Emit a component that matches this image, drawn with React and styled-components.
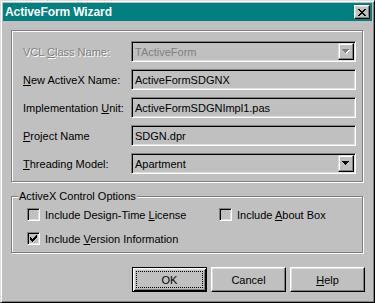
import React from 'react';
import styled, { createGlobalStyle } from 'styled-components';

const Global = createGlobalStyle`
  html, body { margin: 0; padding: 0; background: #c0c0c0; }
  body { font-family: "Liberation Sans", Arial, sans-serif; font-size: 11px; color: #000; }
`;

const Window = styled.div`
  box-sizing: border-box;
  width: 375px;
  height: 303px;
  background: #c0c0c0;
  border: 1px solid;
  border-color: #dfdfdf #000 #000 #dfdfdf;
  box-shadow: inset 1px 1px #fff, inset -1px -1px #808080;
  padding: 2px;
  display: flex;
  flex-direction: column;
`;

const TitleBar = styled.div`
  height: 18px;
  background: #008080;
  color: #fff;
  font-weight: bold;
  font-size: 12px;
  display: flex;
  align-items: center;
  justify-content: space-between;
  padding: 0 2px 0 2px;
`;

const TitleText = styled.span`
  letter-spacing: -0.1px;
`;

const CloseButton = styled.div`
  box-sizing: border-box;
  width: 16px;
  height: 14px;
  background: #c0c0c0;
  border: 1px solid;
  border-color: #fff #000 #000 #fff;
  box-shadow: inset -1px -1px #808080, inset 1px 1px #dfdfdf;
  display: flex;
  align-items: center;
  justify-content: center;
`;

const Content = styled.div`
  display: flex;
  flex-direction: column;
  padding: 9px 7px 0 8px;
`;

const GroupBox = styled.div`
  position: relative;
  box-sizing: border-box;
  width: 352px;
  border: 1px solid #808080;
  box-shadow: inset 1px 1px #fff, 1px 1px #fff;
  margin-top: ${p => p.$mt || 0}px;
`;

const FormGrid = styled.div`
  display: grid;
  grid-template-columns: 108px 225px;
  row-gap: 7px;
  align-items: center;
  padding: 10px 6px 7px 11px;
`;

const Label = styled.span`
  color: ${p => (p.$disabled ? '#808080' : '#000')};
  text-shadow: ${p => (p.$disabled ? '1px 1px 0 #fff' : 'none')};
  white-space: nowrap;
`;

const Field = styled.div`
  box-sizing: border-box;
  width: 225px;
  height: 21px;
  border: 1px solid;
  border-color: #808080 #fff #fff #808080;
  box-shadow: inset 1px 1px #000, inset -1px -1px #dfdfdf;
  background: #c0c0c0;
  padding: 1px;
  display: flex;
  align-items: center;
`;

const FieldValue = styled.span`
  flex: 1;
  padding-left: 2px;
  color: ${p => (p.$disabled ? '#808080' : '#000')};
  white-space: nowrap;
`;

const DropButton = styled.div`
  box-sizing: border-box;
  width: 16px;
  height: 17px;
  border: 1px solid;
  border-color: #dfdfdf #000 #000 #dfdfdf;
  box-shadow: inset -1px -1px #808080, inset 1px 1px #fff;
  display: flex;
  align-items: center;
  justify-content: center;
`;

const OptionsGrid = styled.div`
  display: grid;
  grid-template-columns: 192px auto;
  row-gap: 11px;
  padding: 11px 6px 7px 15px;
`;

const Legend = styled.span`
  position: absolute;
  top: -7px;
  left: 6px;
  padding: 0 1px 0 1px;
  background: #c0c0c0;
  line-height: 13px;
`;

const CheckItem = styled.div`
  display: flex;
  align-items: center;
  gap: 5px;
  height: 13px;
`;

const CheckBox = styled.div`
  box-sizing: border-box;
  width: 13px;
  height: 13px;
  flex: none;
  border: 1px solid;
  border-color: #808080 #fff #fff #808080;
  box-shadow: inset 1px 1px #000, inset -1px -1px #dfdfdf;
  background: #c0c0c0;
  display: flex;
  align-items: center;
  justify-content: center;
`;

const ButtonRow = styled.div`
  display: flex;
  justify-content: flex-end;
  gap: 4px;
  margin-top: 14px;
`;

const Button = styled.div`
  box-sizing: border-box;
  width: 75px;
  height: 25px;
  padding: 3px;
  display: flex;
  border: 1px solid;
  border-color: ${p => (p.$default ? '#000' : '#fff #000 #000 #fff')};
  box-shadow: ${p =>
    p.$default
      ? 'inset 1px 1px #fff, inset -1px -1px #000, inset 2px 2px #dfdfdf, inset -2px -2px #808080'
      : 'inset -1px -1px #808080, inset 1px 1px #dfdfdf'};
`;

const ButtonFace = styled.span`
  flex: 1;
  display: flex;
  align-items: center;
  justify-content: center;
  border: 1px dotted ${p => (p.$focus ? '#000' : 'transparent')};
`;

const CheckMark = () => (
  <svg width="7" height="7" viewBox="0 0 7 7" shapeRendering="crispEdges">
    <path
      fill="#000"
      d="M6 0h1v3h-1zM5 1h1v3h-1zM4 2h1v3h-1zM0 2h1v3h-1zM1 3h1v3h-1zM2 4h1v3h-1zM3 3h1v3h-1z"
    />
  </svg>
);

const Arrow = ({ disabled }) => (
  <svg width="8" height="5" viewBox="0 0 8 5" shapeRendering="crispEdges">
    {disabled && <path fill="#fff" d="M1 1h7v1h-7zM2 2h5v1h-5zM3 3h3v1h-3zM4 4h1v1h-1z" />}
    <path
      fill={disabled ? '#808080' : '#000'}
      d="M0 0h7v1h-7zM1 1h5v1h-5zM2 2h3v1h-3zM3 3h1v1h-1z"
    />
  </svg>
);

const CloseGlyph = () => (
  <svg width="8" height="7" viewBox="0 0 8 7" shapeRendering="crispEdges">
    <path
      fill="#000"
      d="M0 0h2v1h-2zM6 0h2v1h-2zM1 1h2v1h-2zM5 1h2v1h-2zM2 2h4v1h-4zM3 3h2v1h-2zM2 4h4v1h-4zM1 5h2v1h-2zM5 5h2v1h-2zM0 6h2v1h-2zM6 6h2v1h-2z"
    />
  </svg>
);

const rows = [
  { label: <>VCL <u>C</u>lass Name:</>, value: 'TActiveForm', disabled: true, combo: true },
  { label: <><u>N</u>ew ActiveX Name:</>, value: 'ActiveFormSDGNX' },
  { label: <>Implementation <u>U</u>nit:</>, value: 'ActiveFormSDGNImpl1.pas' },
  { label: <><u>P</u>roject Name</>, value: 'SDGN.dpr' },
  { label: <><u>T</u>hreading Model:</>, value: 'Apartment', combo: true },
];

export default function App() {
  return (
    <>
      <Global />
      <Window>
        <TitleBar>
          <TitleText>ActiveForm Wizard</TitleText>
          <CloseButton>
            <CloseGlyph />
          </CloseButton>
        </TitleBar>
        <Content>
          <GroupBox>
            <FormGrid>
              {rows.map((r, i) => (
                <React.Fragment key={i}>
                  <Label $disabled={r.disabled}>{r.label}</Label>
                  <Field>
                    <FieldValue $disabled={r.disabled}>{r.value}</FieldValue>
                    {r.combo && (
                      <DropButton>
                        <Arrow disabled={r.disabled} />
                      </DropButton>
                    )}
                  </Field>
                </React.Fragment>
              ))}
            </FormGrid>
          </GroupBox>
          <GroupBox $mt={14}>
            <Legend>ActiveX Control Options</Legend>
            <OptionsGrid>
              <CheckItem>
                <CheckBox />
                <span>Include Design-Time <u>L</u>icense</span>
              </CheckItem>
              <CheckItem>
                <CheckBox />
                <span>Include <u>A</u>bout Box</span>
              </CheckItem>
              <CheckItem>
                <CheckBox>
                  <CheckMark />
                </CheckBox>
                <span>Include <u>V</u>ersion Information</span>
              </CheckItem>
            </OptionsGrid>
          </GroupBox>
          <ButtonRow>
            <Button $default>
              <ButtonFace $focus>OK</ButtonFace>
            </Button>
            <Button>
              <ButtonFace>Cancel</ButtonFace>
            </Button>
            <Button>
              <ButtonFace><span><u>H</u>elp</span></ButtonFace>
            </Button>
          </ButtonRow>
        </Content>
      </Window>
    </>
  );
}
